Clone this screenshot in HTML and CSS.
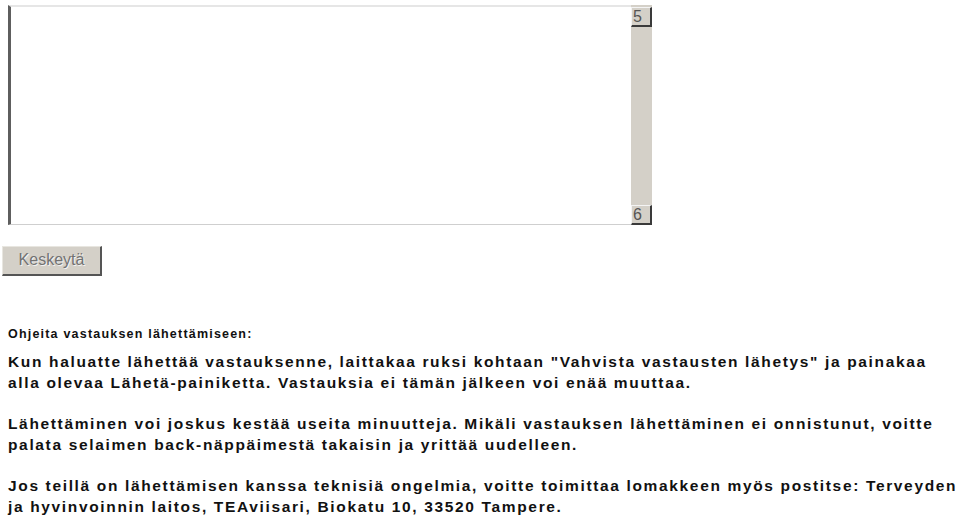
FILE: index.html
```html
<!DOCTYPE html>
<html lang="fi">
<head>
<meta charset="utf-8">
<title>Lähetys</title>
<link rel="stylesheet" href="styles.css">
</head>
<body>
<div class="viewer">
  <div class="pane"></div>
  <div class="scroll">
    <div class="sbtn">5</div>
    <div class="track"></div>
    <div class="sbtn">6</div>
  </div>
</div>
<div class="actions">
  <button class="btn" type="button">Keskeytä</button>
</div>
<div class="help">
  <p class="help-title">Ohjeita vastauksen lähettämiseen:</p>
  <p>Kun haluatte lähettää vastauksenne, laittakaa ruksi kohtaan "Vahvista vastausten lähetys" ja painakaa alla olevaa Lähetä-painiketta. Vastauksia ei tämän jälkeen voi enää muuttaa.</p>
  <p>Lähettäminen voi joskus kestää useita minuutteja. Mikäli vastauksen lähettäminen ei onnistunut, voitte palata selaimen back-näppäimestä takaisin ja yrittää uudelleen.</p>
  <p>Jos teillä on lähettämisen kanssa teknisiä ongelmia, voitte toimittaa lomakkeen myös postitse: Terveyden ja hyvinvoinnin laitos, TEAviisari, Biokatu 10, 33520 Tampere.</p>
</div>
</body>
</html>
```

FILE: styles.css
```css
html, body {
  margin: 0;
  padding: 0;
  background: #ffffff;
}

body {
  font-family: "Liberation Sans", Arial, sans-serif;
}

/* framed viewer with an old-style scroll bar */
.viewer {
  display: flex;
  margin: 5px 0 0 8px;
  width: 644px;
  height: 220px;
}

.pane {
  flex: 1;
  border-top: 2px solid #e6e6e6;
  border-left: 3px solid #5e5e5e;
  border-bottom: 1px solid #cfcfcf;
  background: #fff;
}

.scroll {
  width: 21px;
  display: flex;
  flex-direction: column;
  background: #d4d0c8;
  padding-top: 2px;
}

.track {
  flex: 1;
}

.sbtn {
  height: 17px;
  border-top: 1px solid #f4f4f4;
  border-left: 1px solid #f4f4f4;
  border-right: 2px solid #3a3a3a;
  border-bottom: 2px solid #3a3a3a;
  background: #d4d0c8;
  color: #555;
  font-size: 16px;
  line-height: 18px;
  padding-left: 1px;
}

.actions {
  padding: 21px 0 0 2px;
}

.btn {
  width: 100px;
  height: 30px;
  background: #d4d0c8;
  border: none;
  border-top: 1px solid #e8e6e0;
  border-left: 1px solid #e8e6e0;
  border-right: 2px solid #555;
  border-bottom: 2px solid #555;
  color: #727272;
  font-family: "Liberation Sans", Arial, sans-serif;
  font-size: 16px;
  padding: 0 0 1px 0;
  text-shadow: 1px 1px 0 #f2f2f2;
}

.help {
  padding: 50px 0 0 8px;
  font-weight: bold;
  color: #111;
}

.help p {
  margin: 0 0 20px 0;
  font-size: 15.5px;
  line-height: 21px;
  letter-spacing: 1.65px;
}

.help p.help-title {
  font-size: 12.5px;
  line-height: 16px;
  letter-spacing: 1.2px;
  margin-bottom: 9px;
}
```
